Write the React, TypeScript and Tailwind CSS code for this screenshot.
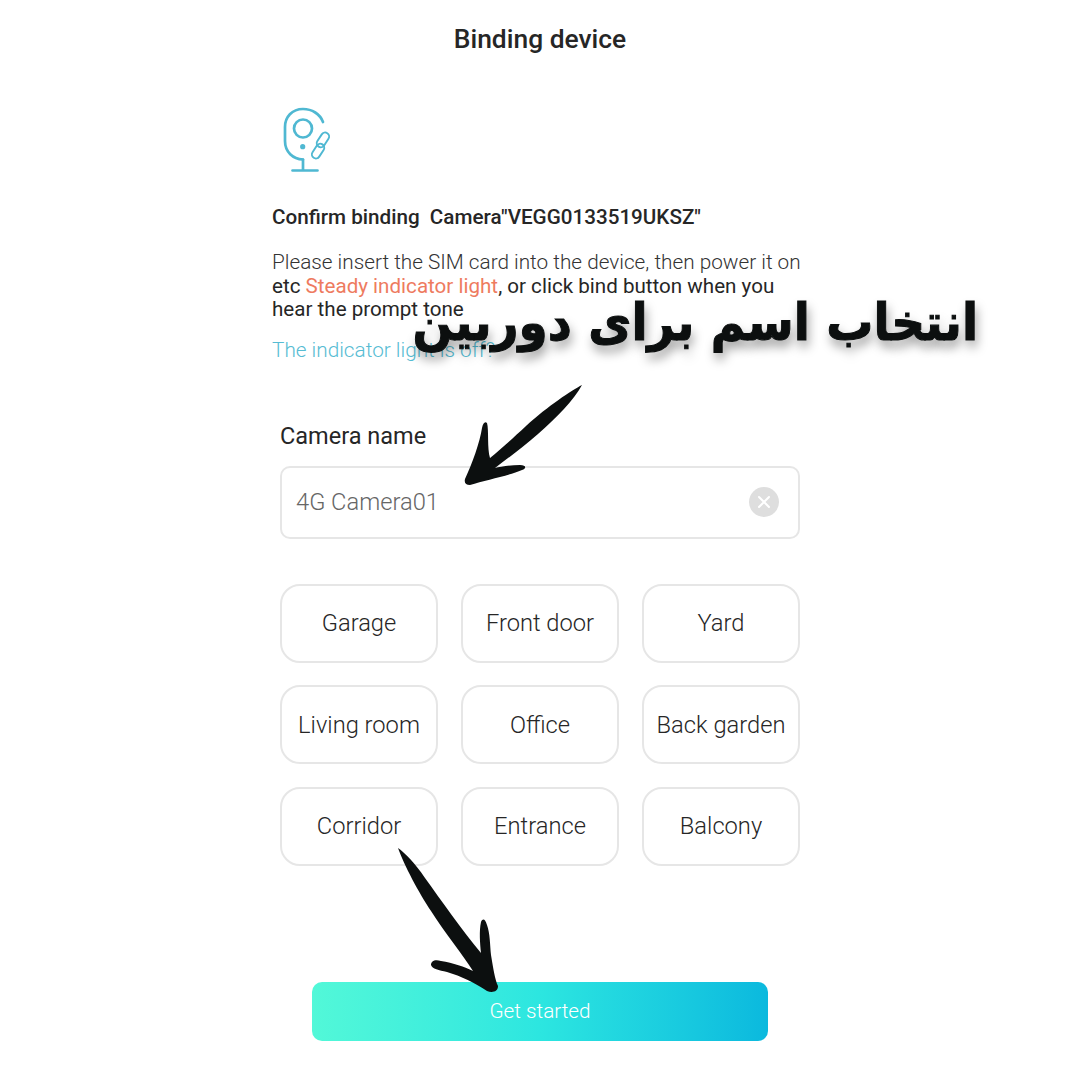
const rooms = [
  'Garage',
  'Front door',
  'Yard',
  'Living room',
  'Office',
  'Back garden',
  'Corridor',
  'Entrance',
  'Balcony',
];

function CameraIcon() {
  return (
    <svg width="100" height="100" viewBox="0 0 100 100" fill="none" stroke="#4fb8d2" className="block">
      {/* body */}
      <path
        d="M63 33 C60 25 52 20 43 20 C32 20 25 28 25 38 L25 52 C25 63 33 70 43 70.5"
        strokeWidth="2.7"
        strokeLinecap="round"
      />
      <circle cx="43" cy="39.5" r="9" strokeWidth="2.7" />
      <circle cx="42.7" cy="57.7" r="2.6" fill="#4fb8d2" stroke="none" />
      {/* stand */}
      <path d="M43 70.5 V81.5 M32.5 81.5 H57.5" strokeWidth="2.7" strokeLinecap="round" />
      {/* link */}
      <g transform="rotate(-57 60.5 56.5)" strokeWidth="1.9">
        <rect x="46.5" y="53.5" width="16" height="8" rx="4" />
        <rect x="58.5" y="51.5" width="16" height="8" rx="4" />
      </g>
    </svg>
  );
}

function TopArrow() {
  return (
    <svg width="130" height="112" viewBox="0 0 130 112" className="absolute left-[460px] top-[380px]">
      <path
        d="M122 5 C112 10 88 26 66 46 C52 59 40 70 30 78 C27 68 29 50 27 43 C25 41 23 43 22 48 C20 62 12 84 5 99 C4 103 6 105 10 105 C26 100 48 96 62 90 C67 88 66 85 60 85 C50 85 40 87 35 88 C48 78 62 68 78 54 C96 38 114 20 122 5 Z"
        fill="#0c0f0f"
      />
    </svg>
  );
}

function BottomArrow() {
  return (
    <svg width="110" height="150" viewBox="0 0 110 150" className="absolute left-[395px] top-[845px]">
      <path
        d="M3 3 C10 8 20 18 30 33 C46 55 66 84 86 108 C85 98 84 86 86 77 C88 73 90 74 92 80 C95 88 95 100 96 110 C98 122 100 135 103 141 C103 147 97 148 92 146 C80 138 66 131 52 127 C44 125 37 124 36 120 C36 116 40 114 46 116 C58 118 70 122 78 126 C68 110 50 88 36 66 C24 48 9 20 3 3 Z"
        fill="#0c0f0f"
      />
    </svg>
  );
}

export default function App() {
  return (
    <div className="relative w-[1080px] h-[1080px] overflow-hidden bg-white font-['Roboto',sans-serif] text-[#262626]">
      <h1 className="pt-[22px] h-[89px] text-center text-[26.4px] leading-[34px] font-medium">Binding device</h1>

      <div className="w-[536px] ml-[272px]">
        <div className="ml-[-12px] h-[100px]">
          <CameraIcon />
        </div>

        <p className="mt-[16px] text-[20.65px] leading-[24px] font-medium whitespace-pre">
          {'Confirm binding  Camera"VEGG0133519UKSZ"'}
        </p>

        <p className="mt-[22px] text-[20.6px] leading-[23.5px] whitespace-nowrap">
          <span className="font-light text-[20.75px] text-[#333333]">
            Please insert the SIM card into the device, then power it on
          </span>
          <br />
          etc <span className="text-[#ee7b5f]">Steady indicator light</span>, or click bind button when you
          <br />
          hear the prompt tone
        </p>

        <p className="mt-[16px] text-[20.75px] leading-[24px] font-light text-[#56bcd3]">
          The indicator light is off?
        </p>
      </div>

      <div className="w-[520px] ml-[280px] mt-[59px]">
        <label className="block text-[23.5px] leading-[30px]">Camera name</label>

        <div className="mt-[15px] h-[73px] flex items-center justify-between pl-[14px] pr-[19px] border-2 border-[#e6e6e6] rounded-[10px]">
          <span className="pt-[2px] text-[23.7px] font-light text-[#666666]">4G Camera01</span>
          <span className="w-[30px] h-[30px] rounded-full bg-[#dedede] flex items-center justify-center">
            <svg width="14" height="14" viewBox="0 0 14 14" stroke="#ffffff" strokeWidth="2" strokeLinecap="round">
              <path d="M2 2 L12 12 M12 2 L2 12" />
            </svg>
          </span>
        </div>

        <div className="mt-[45px] grid grid-cols-3 gap-x-[23px] gap-y-[22.5px]">
          {rooms.map((room) => (
            <div
              key={room}
              className="h-[79px] pt-[2px] flex items-center justify-center border-2 border-[#e6e6e6] rounded-[20px] text-[23.7px] font-light whitespace-nowrap"
            >
              {room}
            </div>
          ))}
        </div>
      </div>

      <button className="block mt-[116.5px] ml-[312px] w-[456px] h-[59px] rounded-[10px] bg-gradient-to-r from-[#52f8d8] via-[#2ce6e0] to-[#0bb9de] text-white text-[20.7px] font-light">
        Get started
      </button>

      {/* overlay caption + arrows */}
      <div
        dir="rtl"
        className="absolute right-[102px] top-[288px] text-[47px] leading-[70px] font-bold text-[#0c0f0f] whitespace-nowrap font-['DejaVu_Sans',sans-serif] scale-y-[1.08] [-webkit-text-stroke:1px_#0c0f0f] [text-shadow:2px_6px_10px_rgba(0,0,0,0.4)]"
      >
        انتخاب اسم برای دوربین
      </div>
      <TopArrow />
      <BottomArrow />
    </div>
  );
}
